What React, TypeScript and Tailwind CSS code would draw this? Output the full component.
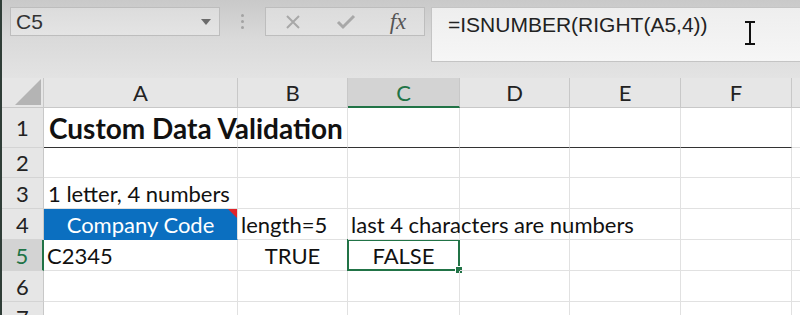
import { ReactNode } from "react";

const cols = [
  { key: "A", w: "w-[194px]" },
  { key: "B", w: "w-[110px]" },
  { key: "C", w: "w-[112px]" },
  { key: "D", w: "w-[110px]" },
  { key: "E", w: "w-[111px]" },
  { key: "F", w: "w-[111px]" },
  { key: "", w: "w-[40px]" },
];

const rowHeights: Record<number, string> = {
  1: "h-[40px]",
  2: "h-[30px]",
  3: "h-[31px]",
  4: "h-[31px]",
  5: "h-[31px]",
  6: "h-[31px]",
  7: "h-[31px]",
};

function Cell({
  w,
  className = "",
  children,
}: {
  w: string;
  className?: string;
  children?: ReactNode;
}) {
  return (
    <div
      className={`${w} shrink-0 relative flex items-center border-r border-b border-[#e1e1e1] whitespace-nowrap ${className}`}
    >
      {children}
    </div>
  );
}

function RowHeader({ n, active }: { n: number; active?: boolean }) {
  return (
    <div
      className={`w-[42px] shrink-0 flex items-center justify-center border-b border-[#d4d4d4] text-[22px] ${
        active
          ? "bg-[#d3d3d3] text-[#217346] border-r-2 border-r-[#217346]"
          : "bg-[#e6e6e6] text-[#222] border-r border-r-[#c8c8c8]"
      }`}
    >
      {n}
    </div>
  );
}

export default function App() {
  const font = "font-['Lato','Open_Sans',sans-serif]";

  return (
    <div className="w-[800px] h-[315px] overflow-hidden flex bg-white">
      {/* dark window edge */}
      <div className="w-[2px] shrink-0 bg-[#2f3d37]" />

      <div className="flex-1 flex flex-col min-w-0">
        {/* formula bar */}
        <div className="h-[78px] shrink-0 flex items-start bg-gradient-to-b from-[#c9c9c9] via-[#dadada] to-[#e3e3e3] pt-[7px] pl-[8px] font-['Liberation_Sans',Arial,sans-serif]">
          <div className="w-[210px] h-[29px] flex items-center justify-between border border-[#bdbdbd] bg-gradient-to-b from-[#dcdcdc] to-[#e4e4e4] pl-[5px] pr-[8px]">
            <span className="text-[21px] text-[#333]">C5</span>
            <svg width="10" height="6" viewBox="0 0 10 6">
              <path d="M0 0 L10 0 L5 6 Z" fill="#6b6b6b" />
            </svg>
          </div>
          <div className="w-[45px] h-[29px] flex flex-col items-center justify-center gap-[3px]">
            <span className="w-[3px] h-[3px] rounded-full bg-[#a3a3a3]" />
            <span className="w-[3px] h-[3px] rounded-full bg-[#a3a3a3]" />
            <span className="w-[3px] h-[3px] rounded-full bg-[#a3a3a3]" />
          </div>
          <div className="w-[160px] h-[29px] flex items-center border border-[#bdbdbd] bg-gradient-to-b from-[#dcdcdc] to-[#e2e2e2]">
            <div className="w-[53px] flex justify-center">
              <svg width="16" height="16" viewBox="0 0 16 16">
                <path d="M2 2 L14 14 M14 2 L2 14" stroke="#a8a8a8" strokeWidth="2" />
              </svg>
            </div>
            <div className="w-[53px] flex justify-center">
              <svg width="20" height="16" viewBox="0 0 20 16">
                <path d="M2 8 L7 13 L18 2" stroke="#a8a8a8" strokeWidth="3" fill="none" />
              </svg>
            </div>
            <div className="w-[52px] flex justify-center text-[23px] italic text-[#555] font-['Liberation_Serif',serif] leading-none">
              fx
            </div>
          </div>
          <div className="ml-[6px] flex-1 h-[55px] relative border-t border-l border-b border-[#c4c4c4] bg-gradient-to-b from-[#eeeeee] to-[#f6f6f6] pl-[16px] pt-[1px]">
            <span className="text-[21px] text-[#222]">=ISNUMBER(RIGHT(A5,4))</span>
            <svg
              className="absolute left-[311px] top-[13px]"
              width="14"
              height="24"
              viewBox="0 0 14 24"
            >
              <path
                d="M2 1 H12 M7 1 V23 M2 23 H12"
                stroke="#111"
                strokeWidth="2"
                fill="none"
              />
            </svg>
          </div>
        </div>

        {/* sheet */}
        <div className={`flex-1 flex flex-col ${font} text-[22px] text-[#111]`}>
          {/* column headers */}
          <div className="h-[30px] shrink-0 flex bg-[#e6e6e6]">
            <div className="w-[42px] shrink-0 relative border-r border-b border-[#c8c8c8]">
              <svg
                className="absolute right-[2px] bottom-[2px]"
                width="26"
                height="26"
                viewBox="0 0 26 26"
              >
                <path d="M26 0 L26 26 L0 26 Z" fill="#b4b4b4" />
              </svg>
            </div>
            {cols.map((c) => (
              <div
                key={c.key}
                className={`${c.w} shrink-0 flex items-center justify-center ${
                  c.key === "C"
                    ? "bg-[#d3d3d3] text-[#217346] border-b-2 border-b-[#217346] border-r border-r-[#c8c8c8]"
                    : "text-[#222] border-r border-b border-[#c8c8c8]"
                }`}
              >
                {c.key}
              </div>
            ))}
          </div>

          {/* row 1 */}
          <div className={`${rowHeights[1]} shrink-0 flex`}>
            <RowHeader n={1} />
            <Cell w={cols[0].w} className="border-b-[#333] pl-[5px] font-bold text-[28px] overflow-visible z-10">
              Custom Data Validation
            </Cell>
            <Cell w={cols[1].w} className="border-b-[#333]" />
            <Cell w={cols[2].w} className="border-b-[#333]" />
            <Cell w={cols[3].w} className="border-b-[#333]" />
            <Cell w={cols[4].w} className="border-b-[#333]" />
            <Cell w={cols[5].w} className="border-b-[#333]" />
            <Cell w={cols[6].w} />
          </div>

          {/* row 2 */}
          <div className={`${rowHeights[2]} shrink-0 flex`}>
            <RowHeader n={2} />
            {cols.map((c) => (
              <Cell key={c.key} w={c.w} />
            ))}
          </div>

          {/* row 3 */}
          <div className={`${rowHeights[3]} shrink-0 flex`}>
            <RowHeader n={3} />
            <Cell w={cols[0].w} className="pl-[4px]">
              1 letter, 4 numbers
            </Cell>
            {cols.slice(1).map((c) => (
              <Cell key={c.key} w={c.w} />
            ))}
          </div>

          {/* row 4 */}
          <div className={`${rowHeights[4]} shrink-0 flex`}>
            <RowHeader n={4} />
            <Cell w={cols[0].w} className="bg-[#0b6fc0] border-b-[#0b6fc0] text-white justify-center">
              Company Code
              <svg
                className="absolute right-0 top-0"
                width="9"
                height="9"
                viewBox="0 0 9 9"
              >
                <path d="M0 0 L9 0 L9 9 Z" fill="#e0242a" />
              </svg>
            </Cell>
            <Cell w={cols[1].w} className="pl-[3px]">
              length=5
            </Cell>
            <Cell w={cols[2].w} className="pl-[3px] overflow-visible z-10">
              last 4 characters are numbers
            </Cell>
            <Cell w={cols[3].w} />
            <Cell w={cols[4].w} />
            <Cell w={cols[5].w} />
            <Cell w={cols[6].w} />
          </div>

          {/* row 5 */}
          <div className={`${rowHeights[5]} shrink-0 flex`}>
            <RowHeader n={5} active />
            <Cell w={cols[0].w} className="pl-[3px]">
              C2345
            </Cell>
            <Cell w={cols[1].w} className="justify-center">
              TRUE
            </Cell>
            <Cell w={cols[2].w} className="justify-center">
              FALSE
              <div className="absolute -left-px -top-px -right-px -bottom-px border-2 border-[#217346]" />
              <div className="absolute -right-[4px] -bottom-[4px] w-[6px] h-[6px] bg-[#217346] border border-white box-content" />
            </Cell>
            <Cell w={cols[3].w} />
            <Cell w={cols[4].w} />
            <Cell w={cols[5].w} />
            <Cell w={cols[6].w} />
          </div>

          {/* row 6 */}
          <div className={`${rowHeights[6]} shrink-0 flex`}>
            <RowHeader n={6} />
            {cols.map((c) => (
              <Cell key={c.key} w={c.w} />
            ))}
          </div>

          {/* row 7 */}
          <div className={`${rowHeights[7]} shrink-0 flex`}>
            <RowHeader n={7} />
            {cols.map((c) => (
              <Cell key={c.key} w={c.w} />
            ))}
          </div>
        </div>
      </div>
    </div>
  );
}
